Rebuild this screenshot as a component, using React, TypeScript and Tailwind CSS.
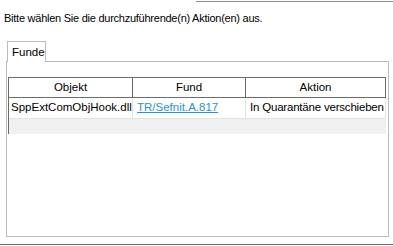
import React from 'react';

// Columns of the findings list (widths in px, including the right gridline)
const columns = [
  { title: 'Objekt', width: 'w-[124px]' },
  { title: 'Fund', width: 'w-[113px]' },
  { title: 'Aktion', width: 'w-[140px]' },
];

export default function App() {
  return (
    <div
      className="flex h-[246px] w-[393px] flex-col whitespace-nowrap bg-white text-black"
      style={{ fontFamily: '"Liberation Sans", Arial, sans-serif' }}
    >
      {/* top rule */}
      <div className="ml-[196px] mt-px h-px bg-[#8e8e8e]" />

      <div className="mt-[9px] pl-1 text-[11px] leading-[15px] tracking-[-0.25px]">
        Bitte wählen Sie die durchzuführende(n) Aktion(en) aus.
      </div>

      {/* tab strip */}
      <div className="mt-[15px] flex pl-[7px]">
        <div className="relative z-10 -mb-px flex h-[21px] w-[39px] items-center border border-b-0 border-[#bcbcbc] bg-white pl-[4px] text-[11.5px] leading-[15px]">
          Funde
        </div>
      </div>

      {/* tab page */}
      <div className="ml-[6px] h-[176px] w-[383px] border border-[#bcbcbc] bg-white px-px pt-[15px]">
        <div className="flex h-[57px] w-[378px] flex-col border-l border-t border-[#6b6b6b] bg-[#f0f0f0]">
          {/* header */}
          <div className="flex h-[20px] border-b border-[#6b6b6b] bg-white text-[11.5px]">
            {columns.map((c) => (
              <div
                key={c.title}
                className={`${c.width} flex items-center justify-center border-r border-[#6b6b6b]`}
              >
                {c.title}
              </div>
            ))}
          </div>
          {/* row */}
          <div className="flex h-[21px] border-b border-[#e2e2e2] bg-white text-[11.5px]">
            <div className="flex w-[124px] items-center border-r border-[#e2e2e2] pl-[2px]">
              SppExtComObjHook.dll
            </div>
            <div className="flex w-[113px] items-center border-r border-[#e2e2e2] pl-[4px]">
              <span className="text-[#2b8fdc] underline">TR/Sefnit.A.817</span>
            </div>
            <div className="flex w-[140px] items-center border-r border-[#e2e2e2] pl-[4px] tracking-[-0.2px]">
              In Quarantäne verschieben
            </div>
          </div>
        </div>
      </div>

      {/* bottom rule */}
      <div className="mt-auto mb-px h-px bg-[#6e6e6e]" />
    </div>
  );
}
